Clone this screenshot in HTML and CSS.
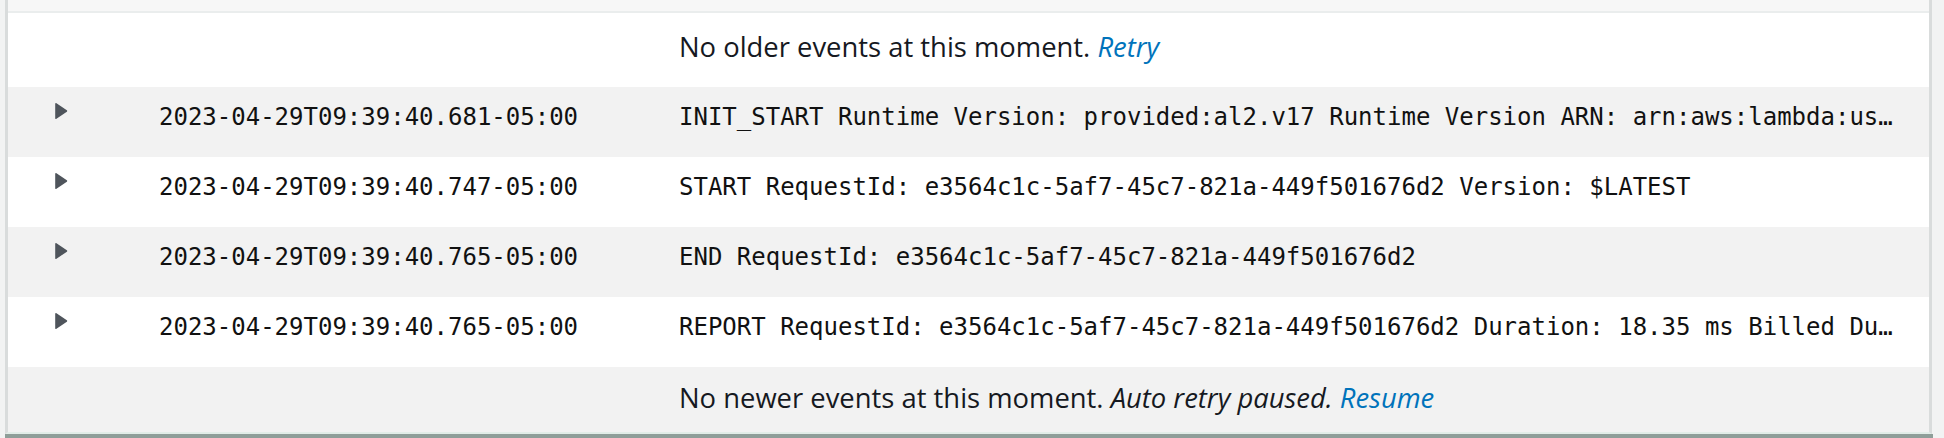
FILE: index.html
```html
<!DOCTYPE html>
<html lang="en">
<head>
<meta charset="utf-8">
<title>Log events</title>
<link rel="stylesheet" href="styles.css">
</head>
<body>
<div class="panel">
  <div class="top-strip"></div>
  <div class="notice notice-top">
    <span class="notice-text">No older events at this moment. <a class="link" href="#">Retry</a></span>
  </div>
  <div class="row row-alt">
    <span class="toggle"><svg viewBox="0 0 14 18" width="14" height="18"><path d="M2 1.8 L12.4 9 L2 16.2 Z"/></svg></span>
    <span class="ts">2023-04-29T09:39:40.681-05:00</span>
    <span class="msg">INIT_START Runtime Version: provided:al2.v17 Runtime Version ARN: arn:aws:lambda:us-east-2::runtime:6a4b1e1c0b8f2d3c9e7a5f4b2c1d0e9f8a7b6c5d4e3f2a1b0c9d8e7f6a5b4c3d</span>
  </div>
  <div class="row">
    <span class="toggle"><svg viewBox="0 0 14 18" width="14" height="18"><path d="M2 1.8 L12.4 9 L2 16.2 Z"/></svg></span>
    <span class="ts">2023-04-29T09:39:40.747-05:00</span>
    <span class="msg">START RequestId: e3564c1c-5af7-45c7-821a-449f501676d2 Version: $LATEST</span>
  </div>
  <div class="row row-alt">
    <span class="toggle"><svg viewBox="0 0 14 18" width="14" height="18"><path d="M2 1.8 L12.4 9 L2 16.2 Z"/></svg></span>
    <span class="ts">2023-04-29T09:39:40.765-05:00</span>
    <span class="msg">END RequestId: e3564c1c-5af7-45c7-821a-449f501676d2</span>
  </div>
  <div class="row">
    <span class="toggle"><svg viewBox="0 0 14 18" width="14" height="18"><path d="M2 1.8 L12.4 9 L2 16.2 Z"/></svg></span>
    <span class="ts">2023-04-29T09:39:40.765-05:00</span>
    <span class="msg">REPORT RequestId: e3564c1c-5af7-45c7-821a-449f501676d2 Duration: 18.35 ms Billed Duration: 85 ms Memory Size: 128 MB Max Memory Used: 19 MB Init Duration: 65.84 ms</span>
  </div>
  <div class="notice notice-bottom">
    <span class="notice-text">No newer events at this moment. <em>Auto retry paused.</em> <a class="link" href="#">Resume</a></span>
  </div>
</div>
<div class="page-bottom"></div>
</body>
</html>
```

FILE: styles.css
```css
* { box-sizing: border-box; }

html, body {
  margin: 0;
  padding: 0;
  background: #f2f3f3;
  overflow: hidden;
}

body {
  width: 1944px;
  height: 438px;
  font-family: "Open Sans", "Liberation Sans", sans-serif;
  color: #16191f;
}

.panel {
  margin-left: 5px;
  width: 1927px;
  background: #ffffff;
  border-left: 3px solid #d9dcdc;
  border-right: 3px solid #d9dcdc;
  border-bottom: 2px solid #e2ede8;
}

.top-strip {
  height: 13px;
  background: #f7f7f7;
  border-bottom: 2px solid #eaeded;
}

.notice,
.row {
  display: grid;
  grid-template-columns: 151px 520px 1fr;
}

.notice {
  align-items: center;
  font-size: 27.4px;
  line-height: 40px;
}

.notice-text {
  grid-column: 3;
  white-space: nowrap;
}

.notice-top {
  height: 74px;
  padding-bottom: 6px;
  background: #ffffff;
}

.notice-bottom {
  height: 65px;
  padding-bottom: 4px;
  background: #f2f2f2;
}

.link {
  color: #0073bb;
  font-style: italic;
  text-decoration: none;
}

.notice em {
  font-style: italic;
}

.row {
  height: 70px;
  padding-top: 12px;
  background: #ffffff;
  font-family: "DejaVu Sans Mono", "Liberation Mono", monospace;
  font-size: 24px;
  line-height: 36px;
  color: #111111;
}

.row-alt {
  background: #f2f2f2;
}

.toggle {
  padding-left: 46px;
  height: 36px;
}

.toggle svg {
  display: block;
  margin-top: 3px;
  fill: #4f555c;
  stroke: #4f555c;
  stroke-width: 1.6;
  stroke-linejoin: round;
}

.ts {
  white-space: nowrap;
}

.msg {
  white-space: nowrap;
  overflow: hidden;
  text-overflow: ellipsis;
  padding-right: 30px;
  min-width: 0;
}

.page-bottom {
  height: 4px;
  margin-left: 5px;
  width: 1928px;
  background: #8f9e99;
}
```
